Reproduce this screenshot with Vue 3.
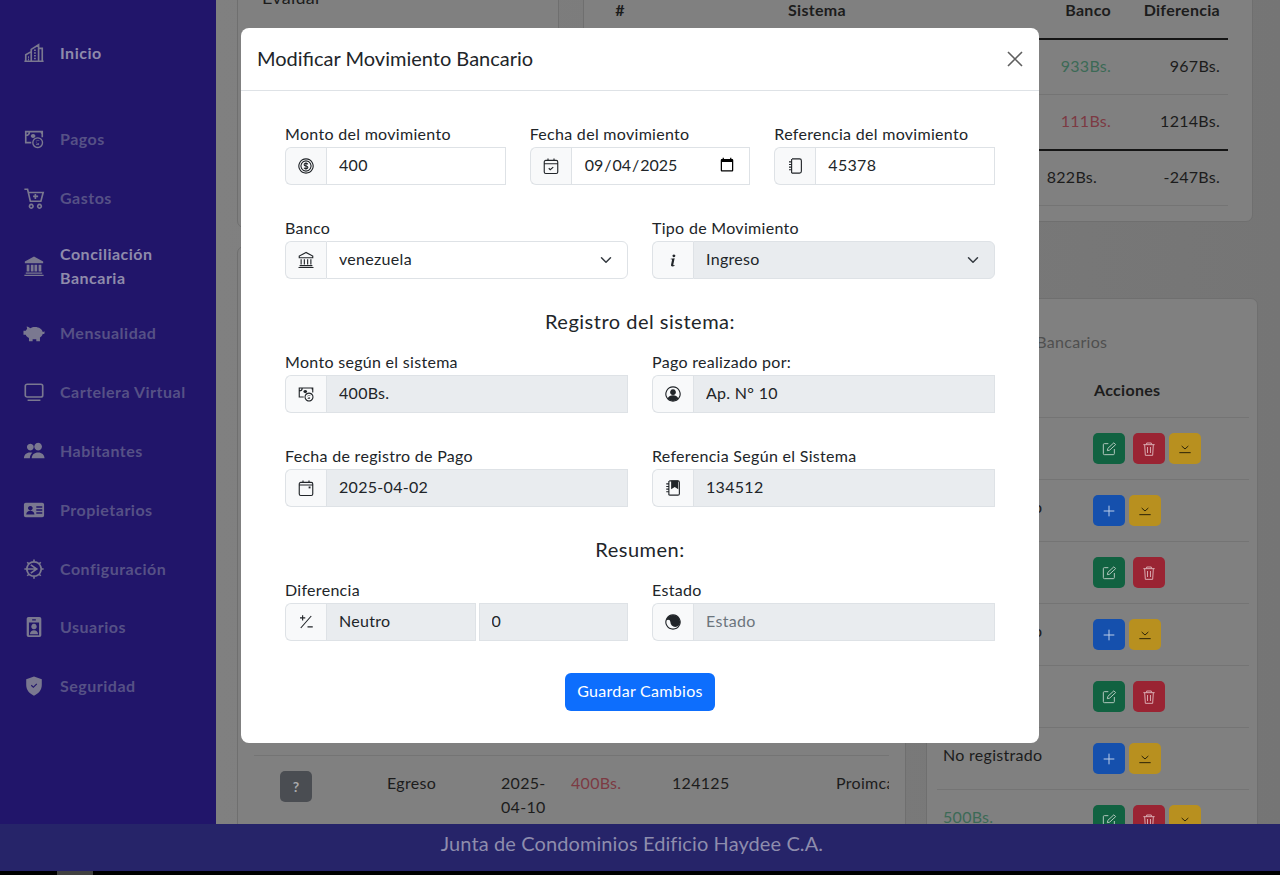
<template>
  <div class="page">
    <div class="shell">
      <aside class="sidebar">
        <a
          v-for="item in menu"
          :key="item.label"
          class="nav-item"
          :class="{ bright: item.bright, tall: item.tall, first: item.first }"
        >
          <Icon :name="item.icon" class="nav-icon" />
          <span class="nav-label">{{ item.label }}</span>
        </a>
      </aside>

      <main class="content">
        <div class="top-row">
          <section class="card evaluar">
            <p class="evaluar-text">Evaluar</p>
          </section>
          <section class="card summary">
            <div class="sum-row sum-head">
              <span class="c-num">#</span>
              <span class="c-sys">Sistema</span>
              <span class="c-bank">Banco</span>
              <span class="c-diff">Diferencia</span>
            </div>
            <div class="sum-row">
              <span></span><span></span>
              <span class="c-bank green">933Bs.</span>
              <span class="c-diff">967Bs.</span>
            </div>
            <div class="sum-row heavy">
              <span></span><span></span>
              <span class="c-bank red">111Bs.</span>
              <span class="c-diff">1214Bs.</span>
            </div>
            <div class="sum-row">
              <span></span><span></span>
              <span class="c-bank total">822Bs.</span>
              <span class="c-diff">-247Bs.</span>
            </div>
          </section>
        </div>

        <div class="bottom-row">
          <section class="card moves">
            <div class="moves-spacer"></div>
            <div class="move-row">
              <span class="badge">?</span>
              <span>Egreso</span>
              <span class="date">2025-04-10</span>
              <span class="red">400Bs.</span>
              <span>124125</span>
              <span class="clip">Proimcasa</span>
            </div>
          </section>

          <section class="card bank-list">
            <p class="bank-title">Movimientos Bancarios</p>
            <div class="bank-head"><span></span><strong>Acciones</strong></div>
            <div v-for="(row, i) in bankRows" :key="i" class="bank-row">
              <span :class="{ green: row.paid }">{{ row.amount }}</span>
              <div class="actions">
                <button v-if="row.edit" class="act act-green"><Icon name="edit" /></button>
                <button v-if="row.edit" class="act act-red gap"><Icon name="trash" /></button>
                <button v-if="!row.edit" class="act act-blue"><Icon name="plus" /></button>
                <button v-if="row.down" class="act act-yellow"><Icon name="download" /></button>
              </div>
            </div>
          </section>
        </div>
      </main>
    </div>

    <footer class="footer">Junta de Condominios Edificio Haydee C.A.</footer>
    <div class="under"><span></span></div>

    <div class="modal-wrap">
      <div class="modal">
        <header class="modal-head">
          <h2>Modificar Movimiento Bancario</h2>
          <button class="close" aria-label="Cerrar">
            <svg viewBox="0 0 16 16"><path d="M1 1l14 14M15 1L1 15" /></svg>
          </button>
        </header>

        <form class="modal-body" @submit.prevent>
          <div class="row three">
            <div class="field">
              <label>Monto del movimiento</label>
              <div class="group">
                <span class="addon"><Icon name="coin" /></span>
                <input class="ctl" type="text" value="400" />
              </div>
            </div>
            <div class="field">
              <label>Fecha del movimiento</label>
              <div class="group">
                <span class="addon"><Icon name="calCheck" /></span>
                <input class="ctl ctl-date" type="date" value="2025-09-04" />
              </div>
            </div>
            <div class="field">
              <label>Referencia del movimiento</label>
              <div class="group">
                <span class="addon"><Icon name="journal" /></span>
                <input class="ctl" type="text" value="45378" />
              </div>
            </div>
          </div>

          <div class="row two">
            <div class="field">
              <label>Banco</label>
              <div class="group">
                <span class="addon"><Icon name="bankLine" /></span>
                <select class="ctl sel"><option>venezuela</option></select>
              </div>
            </div>
            <div class="field">
              <label>Tipo de Movimiento</label>
              <div class="group">
                <span class="addon"><Icon name="info" /></span>
                <select class="ctl sel" disabled><option>Ingreso</option></select>
              </div>
            </div>
          </div>

          <h3>Registro del sistema:</h3>

          <div class="row two">
            <div class="field">
              <label>Monto según el sistema</label>
              <div class="group">
                <span class="addon"><Icon name="money" /></span>
                <input class="ctl" type="text" value="400Bs." disabled />
              </div>
            </div>
            <div class="field">
              <label>Pago realizado por:</label>
              <div class="group">
                <span class="addon"><Icon name="person" /></span>
                <input class="ctl" type="text" value="Ap. N° 10" disabled />
              </div>
            </div>
          </div>

          <div class="row two">
            <div class="field">
              <label>Fecha de registro de Pago</label>
              <div class="group">
                <span class="addon"><Icon name="calendar" /></span>
                <input class="ctl" type="text" value="2025-04-02" disabled />
              </div>
            </div>
            <div class="field">
              <label>Referencia Según el Sistema</label>
              <div class="group">
                <span class="addon"><Icon name="journalMark" /></span>
                <input class="ctl" type="text" value="134512" disabled />
              </div>
            </div>
          </div>

          <h3>Resumen:</h3>

          <div class="row two">
            <div class="field">
              <label>Diferencia</label>
              <div class="group">
                <span class="addon"><Icon name="plusMinus" /></span>
                <input class="ctl" type="text" value="Neutro" disabled />
                <input class="ctl split" type="text" value="0" disabled />
              </div>
            </div>
            <div class="field">
              <label>Estado</label>
              <div class="group">
                <span class="addon"><Icon name="yinYang" /></span>
                <input class="ctl" type="text" placeholder="Estado" disabled />
              </div>
            </div>
          </div>

          <div class="submit">
            <button class="save" type="submit">Guardar Cambios</button>
          </div>
        </form>
      </div>
    </div>
  </div>
</template>

<script setup>
import { h } from 'vue'

// s = stroked path, f = filled path (evenodd), r = rotation of the filled part
const icons = {
  building: { s: 'M3 21v-7l6-3.500M9 21V8l8-5v18M17 7h4v14M1.500 21h21M5.500 16.500h1M5.500 19h1M12 9h2M12 12h2M12 15h2M12 18h2' },
  money: {
    s: 'M21 10V4H3v12h6M3 8c2.500 0 4-1.500 4-4M20 4c0 1.500 .5 2 1 2',
    f: 'M11 6.500a2.500 2.200 0 1 0 .01 0zM16 10a6 6 0 1 0 .01 0zM16 11.500a4.500 4.500 0 1 1-.01 0zM17.800 14h-2.300a1.100 1.100 0 0 0 0 2.300h1a1.100 1.100 0 0 1 0 2.200h-2.300v-.8h2.200a.4.4 0 0 0 0-.8h-1a1.800 1.800 0 0 1 0-3.500h2.400z'
  },
  cart: { s: 'M1.500 2.500H5l3 13h11.500L22 6H6M13.500 7.500v5.500M11 10.200h5.500M9 19a2 2 0 1 0 .01 0zM18 19a2 2 0 1 0 .01 0z' },
  bank: { f: 'M12 1.500 2 7v2h20V7zM4 10.500h3V18H4zM8.500 10.500h3V18h-3zM12.500 10.500h3V18h-3zM17 10.500h3V18h-3zM3 19h18v1.500H3zM1.500 21.500h21V23h-21z' },
  piggy: { f: 'M4 5c2 .5 3 1.200 4 1.800C9.500 6 11 5.500 13 5.500c4.500 0 8 2.500 8.500 5.500.8-.2 1.500-.4 2-.8v2.300c-.5.4-1.200.6-2 .7-.4 1.500-1.500 3-3 3.800V21h-4v-2.300c-1.500.2-2.500.2-4 0V21h-4v-3.500C4.500 16.500 3.500 15.500 3 14H.500V9.500H3c.3-.8.8-1.500 1.500-2z' },
  monitor: { s: 'M4.500 3.500h15A2 2 0 0 1 21.500 5.500v10a2 2 0 0 1-2 2h-15a2 2 0 0 1-2-2v-10a2 2 0 0 1 2-2zM5 21h14' },
  people: { f: 'M8 4a3.700 3.700 0 1 0 .01 0zM16.500 3a4.200 4.200 0 1 0 .01 0zM1 20c0-4 2.800-6.500 6.500-6.500 1 0 2 .2 2.800.5C8.500 15.500 7.500 17.500 7.500 20zM9.500 20c0-4 3-6.500 7-6.500s7 2.500 7 6.500z' },
  idCard: { f: 'M3 4h18a2 2 0 0 1 2 2v12a2 2 0 0 1-2 2H3a2 2 0 0 1-2-2V6a2 2 0 0 1 2-2zM8 7.500a2.500 2.500 0 1 0 .01 0zM3.500 17c.3-3 2-4.200 4.500-4.200s4.200 1.200 4.500 4.200zM14.500 8H21v1.600h-6.500zM14.500 11.200H21v1.600h-6.500zM14.500 14.400H21V16h-6.500z' },
  gear: { s: 'M12 4.200a7.800 7.800 0 1 0 .01 0zM12 1.500v3M12 19.500v3M1.500 12h3M19.500 12h3M4.600 4.600l2.100 2.100M17.300 17.300l2.100 2.100M19.400 4.600l-2.100 2.100M6.700 17.300l-2.100 2.100M8.500 7.500 15 12l-6.500 4.500M5 12h10' },
  badgeUser: { f: 'M6 1h12a2 2 0 0 1 2 2v18a2 2 0 0 1-2 2H6a2 2 0 0 1-2-2V3a2 2 0 0 1 2-2zM10 3.500v1.500h4V3.500zM6.500 7v14h11V7zM12 8.500a3 3 0 1 1-.01 0zM7.500 20c.3-3 2-4.500 4.500-4.500s4.200 1.500 4.500 4.500z' },
  shield: { f: 'M12 1.500 3.500 4.500V11c0 5.500 3.500 9.500 8.500 11.500 5-2 8.500-6 8.500-11.500V4.500zM8.600 11.600l.9-.9 1.800 1.800 3.300-3.300.9.9-4.200 4.200z' },

  coin: {
    s: 'M12 2.500a9.500 9.500 0 1 0 .01 0zM12 5.200a6.800 6.800 0 1 0 .01 0zM14.500 9.800c-.4-1-1.400-1.400-2.500-1.400-1.400 0-2.500.7-2.500 1.800 0 2.500 5 1.100 5 3.600 0 1.200-1.100 1.800-2.500 1.800-1.100 0-2.100-.4-2.600-1.400M12 7v10'
  },
  calCheck: { s: 'M5 4.500h14a2 2 0 0 1 2 2V20a2 2 0 0 1-2 2H5a2 2 0 0 1-2-2V6.500a2 2 0 0 1 2-2zM3 9h18M8 2v3M16 2v3M9 15l2 2 4-3.500' },
  journal: { s: 'M8 2.500h10a2.500 2.500 0 0 1 2.500 2.500v14a2.500 2.500 0 0 1-2.500 2.500H8M7.500 2.500v19M4 6.500h3M4 10h3M4 13.500h3M4 17h3' },
  bankLine: { s: 'M12 2 3 6.800V9h18V6.800zM5.500 11v7M9.800 11v7M14.200 11v7M18.500 11v7M3.500 19.500h17M2 22h20' },
  info: { f: 'M13.200 4.500a1.900 1.900 0 1 0 .01 0zM9 10.200l5.200-.6-1.800 8.400c-.1.700.1.900.6.900.4 0 .9-.1 1.300-.4l-.2 1.100c-.7.600-1.700.9-2.800.9-1.500 0-2.200-.8-1.900-2.200l1.300-6.200c.1-.6 0-.9-1.800-1z' },
  person: {
    s: 'M12 2.500a9.500 9.500 0 1 0 .01 0z',
    f: 'M12 5.800a3.800 3.800 0 1 0 .01 0zM4.800 18c1.500-3 4-4.200 7.200-4.200s5.700 1.200 7.200 4.200A9.500 9.500 0 0 1 4.800 18z'
  },
  calendar: { s: 'M5 4.500h14a2 2 0 0 1 2 2V20a2 2 0 0 1-2 2H5a2 2 0 0 1-2-2V6.500a2 2 0 0 1 2-2zM3 8h18M8 2v2.500M16 2v2.500', f: 'M15.500 10h2.500v2.500h-2.500z' },
  journalMark: {
    s: 'M7 2.500h11.500A2 2 0 0 1 20.500 4.500v15a2 2 0 0 1-2 2H7M6.500 2.500v19M3 6.500h3M3 10h3M3 13.500h3M3 17h3',
    f: 'M9.500 2h9.500v11.500l-4.700-3-4.800 3z'
  },
  plusMinus: { s: 'M19 4 5 20M7.500 3v7M4 6.500h7M14 18.500h7' },
  yinYang: {
    s: 'M12 2.500a9.500 9.500 0 1 0 .01 0z',
    f: 'M12 2.500a9.500 9.500 0 0 1 0 19 6.500 6.500 0 0 1 0-13 3 3 0 0 0 0-6z',
    r: -90
  },

  edit: { s: 'M11 4H5a1.500 1.500 0 0 0-1.500 1.500v13.500A1.500 1.500 0 0 0 5 20.500h13.500A1.500 1.500 0 0 0 20 19v-7M9.500 14.500l.8-3.500 9-8.300 2.700 2.700-9 8.300z' },
  trash: { s: 'M3.500 5.500h17M8.500 5.500V3h7v2.500M5.500 5.500l1 16h11l1-16M9.800 9v9M14.200 9v9' },
  plus: { s: 'M12 4v16M4 12h16' },
  download: { s: 'M7 7.500l5 4.500 5-4.500M3.500 17.500h17' }
}

const Icon = (props) => {
  const def = icons[props.name]
  const kids = []
  if (def.f) {
    kids.push(h('path', {
      d: def.f,
      fill: 'currentColor',
      stroke: 'none',
      'fill-rule': 'evenodd',
      transform: def.r ? `rotate(${def.r} 12 12)` : undefined
    }))
  }
  if (def.s) {
    kids.push(h('path', { d: def.s, fill: 'none', stroke: 'currentColor' }))
  }
  return h('svg', { viewBox: '0 0 24 24', class: 'icon' }, kids)
}

const menu = [
  { label: 'Inicio', icon: 'building', bright: true, first: true },
  { label: 'Pagos', icon: 'money' },
  { label: 'Gastos', icon: 'cart' },
  { label: 'Conciliación Bancaria', icon: 'bank', bright: true, tall: true },
  { label: 'Mensualidad', icon: 'piggy' },
  { label: 'Cartelera Virtual', icon: 'monitor' },
  { label: 'Habitantes', icon: 'people' },
  { label: 'Propietarios', icon: 'idCard' },
  { label: 'Configuración', icon: 'gear' },
  { label: 'Usuarios', icon: 'badgeUser' },
  { label: 'Seguridad', icon: 'shield' }
]

const bankRows = [
  { amount: '500Bs.', paid: true, edit: true, down: true },
  { amount: 'No registrado', down: true },
  { amount: '500Bs.', paid: true, edit: true },
  { amount: 'No registrado', down: true },
  { amount: '500Bs.', paid: true, edit: true },
  { amount: 'No registrado', down: true },
  { amount: '500Bs.', paid: true, edit: true, down: true }
]
</script>

<style scoped>
.page {
  position: relative;
  height: 875px;
  overflow: hidden;
  background: #000;
  font-family: Lato, "Noto Sans", sans-serif;
  font-size: 16px;
  line-height: 24px;
  letter-spacing: 0.3px;
  color: #1c1c1c;
}

.shell {
  display: flex;
  height: 824px;
}

.icon {
  stroke-width: 1.5;
}

/* sidebar */
.sidebar {
  flex: 0 0 216px;
  background: #21156a;
  padding-top: 23px;
  box-sizing: border-box;
}

.nav-item {
  display: flex;
  align-items: center;
  height: 59px;
  padding-left: 23px;
  color: #565186;
  font-weight: 700;
  letter-spacing: 0.5px;
}

.nav-item.first {
  margin-bottom: 27px;
}

.nav-item.tall {
  height: 76px;
  padding-top: 2px;
  box-sizing: border-box;
}

.nav-item:nth-child(10) {
  margin-top: -1px;
}

.nav-item.bright {
  color: #8f8bab;
}

.nav-icon {
  flex: 0 0 22px;
  width: 22px;
  height: 22px;
  margin-right: 15px;
  color: #7a7890;
  stroke-width: 1.8;
}

.nav-label {
  width: 120px;
}

.nav-item:not(.tall) .nav-label {
  width: auto;
}

/* page behind the dialog */
.content {
  flex: 1;
  min-width: 0;
  overflow: hidden;
  padding-left: 21px;
  background: linear-gradient(90deg, #808080, #757575);
}

.card {
  box-sizing: border-box;
  border: 1px solid #6f6f6f;
  border-radius: 7px;
  background: #808080;
}

.top-row {
  display: flex;
  align-items: flex-start;
  gap: 24px;
  margin-top: -30px;
}

.evaluar {
  width: 322px;
  height: 258px;
  padding: 14px 24px;
}

.evaluar-text {
  margin: 0;
  font-size: 18px;
}

.summary {
  width: 670px;
  height: 252px;
  padding-right: 24px;
}

.sum-row {
  display: grid;
  grid-template-columns: 72px 322px 141px 109px;
  box-sizing: border-box;
  height: 55px;
  padding-top: 14px;
  border-bottom: 1px solid #747474;
}

.sum-row.heavy {
  height: 56px;
  border-bottom: 2px solid #151515;
}

.sum-row.sum-head {
  height: 69px;
  padding-top: 27px;
  border-bottom: 2px solid #151515;
  font-weight: 700;
}

.c-num,
.c-sys {
  text-align: center;
}

.c-bank,
.c-diff {
  padding-right: 8px;
  text-align: right;
}

.c-bank.total {
  padding-right: 22px;
}

.green {
  color: #3c6a56;
}

.red {
  color: #7c3a43;
}

.bottom-row {
  display: flex;
  align-items: flex-start;
  gap: 20px;
  margin-top: 18px;
}

.moves {
  flex: 0 0 668px;
  height: 640px;
  padding: 0 16px;
}

.moves-spacer {
  height: 508px;
  border-bottom: 1px solid #747474;
}

.move-row {
  display: grid;
  grid-template-columns: 107px 114px 70px 101px 164px 53px;
  padding: 15px 0 0 26px;
  overflow: hidden;
}

.badge {
  width: 32px;
  height: 31px;
  border-radius: 5px;
  background: #4a4d52;
  color: #a8a9ab;
  font-size: 14px;
  font-weight: 700;
  line-height: 31px;
  text-align: center;
}

.date {
  width: 58px;
}

.clip {
  white-space: nowrap;
  overflow: hidden;
}

.bank-list {
  flex: 0 0 332px;
  height: 640px;
  margin-top: 52px;
  padding: 31px 8px 0 10px;
}

.bank-title {
  width: 166px;
  margin: 0;
  color: #4f4f4f;
  white-space: nowrap;
  text-align: right;
}

.bank-head {
  display: grid;
  grid-template-columns: 149px 1fr;
  box-sizing: border-box;
  height: 64px;
  padding-top: 24px;
  border-bottom: 1px solid #747474;
}

.bank-head strong {
  padding-left: 8px;
}

.bank-row {
  display: grid;
  grid-template-columns: 149px 1fr;
  box-sizing: border-box;
  height: 62px;
  padding-top: 15px;
  border-bottom: 1px solid #747474;
}

.bank-row > span {
  padding-left: 6px;
  white-space: nowrap;
}

.actions {
  display: flex;
  gap: 4px;
  padding-left: 7px;
}

.act {
  display: flex;
  align-items: center;
  justify-content: center;
  width: 32px;
  height: 31px;
  padding: 0;
  border: 0;
  border-radius: 5px;
}

.act .icon {
  width: 16px;
  height: 16px;
}

.act.gap {
  margin-left: 4px;
}

.act-green {
  background: #116241;
  color: #b3c7bd;
}

.act-red {
  background: #9a2433;
  color: #d9aab0;
}

.act-blue {
  background: #1550ad;
  color: #bccde8;
}

.act-yellow {
  background: #b8901f;
  color: #2a2208;
}

/* footer */
.footer {
  height: 47px;
  padding-right: 16px;
  box-sizing: border-box;
  background: #262469;
  color: #8e8dad;
  font-size: 20px;
  line-height: 38px;
  text-align: center;
  letter-spacing: 0.1px;
}

.under {
  height: 4px;
  padding-left: 57px;
}

.under span {
  display: block;
  width: 36px;
  height: 4px;
  background: #414141;
}

/* dialog */
.modal-wrap {
  position: fixed;
  top: 0;
  left: 0;
  width: 100%;
  display: flex;
  justify-content: center;
  padding-top: 28px;
}

.modal {
  box-sizing: border-box;
  width: 798px;
  height: 715px;
  border-radius: 8px;
  background: #fff;
  color: #212529;
}

.modal-head {
  display: flex;
  align-items: center;
  justify-content: space-between;
  box-sizing: border-box;
  height: 63px;
  padding: 0 16px;
  border-bottom: 1px solid #dee2e6;
}

.modal-head h2 {
  margin: 0;
  padding-bottom: 3px;
  font-size: 20px;
  font-weight: 400;
  line-height: 30px;
  letter-spacing: 0;
}

.close {
  width: 16px;
  height: 16px;
  padding: 0;
  border: 0;
  background: none;
}

.close svg {
  display: block;
  width: 16px;
  height: 16px;
  fill: none;
  stroke: #5f5f5f;
  stroke-width: 1.6;
}

.modal-body {
  padding: 32px 44px;
}

.row {
  display: grid;
  gap: 24px;
  margin-bottom: 32px;
}

.row.three {
  grid-template-columns: repeat(3, minmax(0, 1fr));
}

.row.two {
  grid-template-columns: repeat(2, minmax(0, 1fr));
}

.field label {
  display: block;
  height: 24px;
  line-height: 22px;
}

.group {
  display: flex;
  height: 38px;
}

.addon {
  display: flex;
  align-items: center;
  justify-content: center;
  flex: 0 0 41px;
  box-sizing: border-box;
  border: 1px solid #dee2e6;
  border-right: 0;
  border-radius: 6px 0 0 6px;
  background: #f8f9fa;
}

.addon .icon {
  width: 18px;
  height: 18px;
}

.ctl {
  flex: 1;
  min-width: 0;
  box-sizing: border-box;
  height: 38px;
  padding: 4px 12px 7px;
  border: 1px solid #dee2e6;
  border-radius: 0;
  background-color: #fff;
  color: #212529;
  font: inherit;
  letter-spacing: inherit;
  outline: 0;
}

.ctl-date {
  letter-spacing: 0;
}

.ctl:disabled {
  background-color: #e9ecef;
  color: #212529;
  opacity: 1;
  -webkit-text-fill-color: #212529;
}

.ctl::placeholder {
  color: #6c757d;
  -webkit-text-fill-color: #6c757d;
  opacity: 1;
}

.split {
  margin-left: 3px;
}

.sel {
  appearance: none;
  border-radius: 0 6px 6px 0;
  padding-right: 36px;
  background-image: url("data:image/svg+xml,%3csvg xmlns='http://www.w3.org/2000/svg' viewBox='0 0 16 16'%3e%3cpath fill='none' stroke='%23343a40' stroke-linecap='round' stroke-linejoin='round' stroke-width='2' d='m2 5 6 6 6-6'/%3e%3c/svg%3e");
  background-repeat: no-repeat;
  background-position: right 15px center;
  background-size: 12px 12px;
}

.ctl.sel:disabled {
  background-color: #e9ecef;
}

h3 {
  margin: 0 0 16px;
  height: 24px;
  font-size: 20px;
  font-weight: 400;
  line-height: 20px;
  letter-spacing: 0.5px;
  text-align: center;
}

.submit {
  display: flex;
  justify-content: center;
}

.save {
  width: 150px;
  height: 38px;
  padding: 0 0 2px;
  border: 0;
  border-radius: 6px;
  background: #0d6efd;
  color: #fff;
  font: inherit;
  letter-spacing: inherit;
}
</style>
